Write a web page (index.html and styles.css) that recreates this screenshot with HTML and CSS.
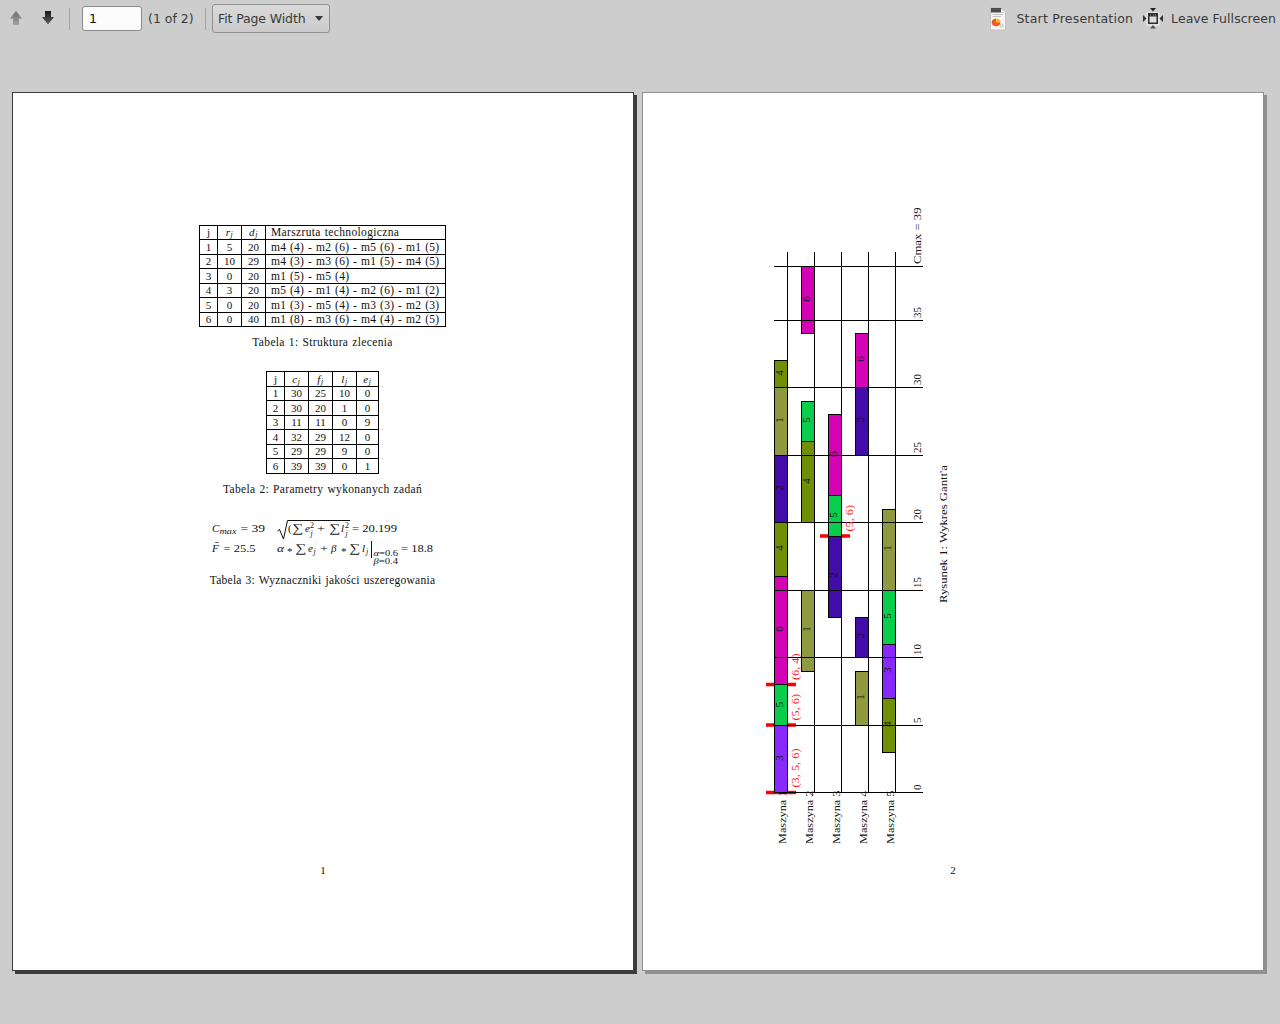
FILE: index.html
```html
<!DOCTYPE html>
<html lang="pl">
<head>
<meta charset="utf-8">
<title>Document Viewer</title>
<link rel="stylesheet" href="styles.css">
</head>
<body>
<header class="toolbar">
  <div class="group">
    <svg class="arrow" width="16" height="16" viewBox="0 0 16 16"><defs><linearGradient id="gu" x1="0" y1="0" x2="0" y2="1"><stop offset="0" stop-color="#6e6e6e"/><stop offset="1" stop-color="#a0a0a0"/></linearGradient></defs><path d="M8 1L14 8.5H11V15H5V8.5H2Z" fill="url(#gu)"/></svg>
    <svg class="arrow" width="16" height="16" viewBox="0 0 16 16"><defs><linearGradient id="gd" x1="0" y1="0" x2="0" y2="1"><stop offset="0" stop-color="#151515"/><stop offset="1" stop-color="#606060"/></linearGradient></defs><path d="M5 1H11V7H14L8 14.5L2 7H5Z" fill="url(#gd)"/></svg>
    <span class="sep"></span>
    <span class="entry">1</span>
    <span class="count">(1 of 2)</span>
    <span class="sep"></span>
    <span class="combo"><span>Fit Page Width</span><svg width="8" height="5" viewBox="0 0 8 5"><path d="M0 0H8L4.5 4.5H3.5Z" fill="#3a3a3a"/></svg></span>
  </div>
  <div class="group">
    <svg class="doc" width="18" height="24" viewBox="0 0 18 24"><path d="M1.5 1H12L16.500 5.500V23H1.500Z" fill="#f4f4f4" stroke="#b8b8b8" stroke-width=".8"/><path d="M2 1H12L15 5.500H2Z" fill="#4a4d50"/><path d="M12 1.500L16 5.500H12Z" fill="#fff"/><path d="M3.500 7.500H14.500M3.500 9.500H12" stroke="#c4c4c4"/><ellipse cx="7" cy="15.500" rx="4.300" ry="3.700" fill="#ef5a28"/><path d="M7 15.500V11.500A4.300 4 0 0 1 11.500 15.500Z" fill="#fbc02d"/><circle cx="12.500" cy="18.500" r="1.500" fill="none" stroke="#bbb"/></svg>
    <span class="label start">Start Presentation</span>
    <svg class="full" width="22" height="22" viewBox="0 0 22 22"><path d="M4 4H18V18H4Z" fill="#e0e0e0"/><path d="M6 5H16V16H6Z" fill="#2d2d2d"/><path d="M7.500 8.500H14.500V14.500H7.500Z" fill="#dcdcdc"/><path d="M8 7H9M11 7H12M13 7H14" stroke="#aaa"/><path d="M8 0H14L11 3.500Z" fill="#222"/><path d="M8 20.500H14L11 17Z" fill="#555"/><path d="M1 7V14L4.500 10.500Z" fill="#333"/><path d="M21 7V14L17.500 10.500Z" fill="#333"/></svg>
    <span class="label leave">Leave Fullscreen</span>
  </div>
</header>
<main class="pages">
  <article class="page current">
    <div class="content">
      <table class="jobs">
        <tr class="head"><td>j</td><td><i>r<sub>j</sub></i></td><td><i>d<sub>j</sub></i></td><td>Marszruta technologiczna</td></tr>
        <tr><td>1</td><td>5</td><td>20</td><td>m4 (4) - m2 (6) - m5 (6) - m1 (5)</td></tr>
        <tr><td>2</td><td>10</td><td>29</td><td>m4 (3) - m3 (6) - m1 (5) - m4 (5)</td></tr>
        <tr><td>3</td><td>0</td><td>20</td><td>m1 (5) - m5 (4)</td></tr>
        <tr><td>4</td><td>3</td><td>20</td><td>m5 (4) - m1 (4) - m2 (6) - m1 (2)</td></tr>
        <tr><td>5</td><td>0</td><td>20</td><td>m1 (3) - m5 (4) - m3 (3) - m2 (3)</td></tr>
        <tr><td>6</td><td>0</td><td>40</td><td>m1 (8) - m3 (6) - m4 (4) - m2 (5)</td></tr>
      </table>
      <p class="caption first">Tabela 1: Struktura zlecenia</p>
      <table class="params">
        <tr><td>j</td><td><i>c<sub>j</sub></i></td><td><i>f<sub>j</sub></i></td><td><i>l<sub>j</sub></i></td><td><i>e<sub>j</sub></i></td></tr>
        <tr><td>1</td><td>30</td><td>25</td><td>10</td><td>0</td></tr>
        <tr><td>2</td><td>30</td><td>20</td><td>1</td><td>0</td></tr>
        <tr><td>3</td><td>11</td><td>11</td><td>0</td><td>9</td></tr>
        <tr><td>4</td><td>32</td><td>29</td><td>12</td><td>0</td></tr>
        <tr><td>5</td><td>29</td><td>29</td><td>9</td><td>0</td></tr>
        <tr><td>6</td><td>39</td><td>39</td><td>0</td><td>1</td></tr>
      </table>
      <p class="caption second">Tabela 2: Parametry wykonanych zadań</p>
      <svg class="formulas" width="225" height="54" viewBox="210 516 225 54">
        <text x="212" y="532" class="it">C</text><text x="219.500" y="534" class="it sm" textLength="17" lengthAdjust="spacingAndGlyphs">max</text><text x="240.500" y="532" textLength="24.500" lengthAdjust="spacingAndGlyphs">= 39</text>
        <path d="M277.500 531L279.500 529.500L283.500 539L287.500 520.500H350" class="rule"/>
        <text x="288" y="532">(</text><text x="292" y="532" class="sum" textLength="11" lengthAdjust="spacingAndGlyphs">∑</text><text x="305" y="532" class="it">e</text><text x="310" y="528" class="sm">2</text><text x="310.500" y="536" class="it sm">j</text><text x="317" y="532" textLength="8" lengthAdjust="spacingAndGlyphs">+</text><text x="329" y="532" class="sum" textLength="11" lengthAdjust="spacingAndGlyphs">∑</text><text x="341" y="532" class="it">l</text><text x="345" y="528" class="sm">2</text><text x="345.500" y="536" class="it sm">j</text><text x="352" y="532" textLength="45" lengthAdjust="spacingAndGlyphs">= 20.199</text>
        <text x="212" y="552" class="it">F</text><path d="M215 542.500H219" class="rule thin"/><text x="223.500" y="552" textLength="32" lengthAdjust="spacingAndGlyphs">= 25.5</text>
        <text x="277" y="552" class="it" textLength="7" lengthAdjust="spacingAndGlyphs">α</text><text x="287" y="555">*</text><text x="295" y="552" class="sum" textLength="11" lengthAdjust="spacingAndGlyphs">∑</text><text x="308" y="552" class="it">e</text><text x="313.500" y="554" class="it sm">j</text><text x="320" y="552" textLength="8" lengthAdjust="spacingAndGlyphs">+</text><text x="331" y="552" class="it">β</text><text x="341" y="555">*</text><text x="349" y="552" class="sum" textLength="11" lengthAdjust="spacingAndGlyphs">∑</text><text x="362" y="552" class="it">l</text><text x="366" y="554" class="it sm">j</text>
        <path d="M371.500 541V558" class="rule"/>
        <text x="373.500" y="556" class="sm" textLength="24.500" lengthAdjust="spacingAndGlyphs"><tspan font-style="italic">α</tspan>=0.6</text><text x="373.500" y="563.500" class="sm" textLength="24.500" lengthAdjust="spacingAndGlyphs"><tspan font-style="italic">β</tspan>=0.4</text><text x="401" y="552" textLength="32" lengthAdjust="spacingAndGlyphs">= 18.8</text>
      </svg>
      <p class="caption third">Tabela 3: Wyznaczniki jakości uszeregowania</p>
    </div>
    <footer>1</footer>
  </article>
  <article class="page">
    <div class="content chart">
      <svg class="gantt" width="200" height="660" viewBox="755 200 200 660">
        <path class="mark" d="M766 792.500H796M766 725H796M766 684.500H796M820 536H850"/>
        <g class="bars">
          <rect class="j3" x="774.500" y="725.500" width="13" height="67"/>
          <rect class="j5" x="774.500" y="684.500" width="13" height="41"/>
          <rect class="j6" x="774.500" y="576.500" width="13" height="108"/>
          <rect class="j4" x="774.500" y="522.500" width="13" height="54"/>
          <rect class="j2" x="774.500" y="455.500" width="13" height="67"/>
          <rect class="j1" x="774.500" y="387.500" width="13" height="68"/>
          <rect class="j4" x="774.500" y="360.500" width="13" height="27"/>
          <rect class="j1" x="801.500" y="590.500" width="13" height="81"/>
          <rect class="j4" x="801.500" y="441.500" width="13" height="81"/>
          <rect class="j5" x="801.500" y="401.500" width="13" height="40"/>
          <rect class="j6" x="801.500" y="266.500" width="13" height="67"/>
          <rect class="j2" x="828.500" y="536.500" width="13" height="81"/>
          <rect class="j5" x="828.500" y="495.500" width="13" height="41"/>
          <rect class="j6" x="828.500" y="414.500" width="13" height="81"/>
          <rect class="j1" x="855.500" y="671.500" width="13" height="54"/>
          <rect class="j2" x="855.500" y="617.500" width="13" height="40"/>
          <rect class="j2" x="855.500" y="387.500" width="13" height="68"/>
          <rect class="j6" x="855.500" y="333.500" width="13" height="54"/>
          <rect class="j4" x="882.500" y="698.500" width="13" height="54"/>
          <rect class="j3" x="882.500" y="644.500" width="13" height="54"/>
          <rect class="j5" x="882.500" y="590.500" width="13" height="54"/>
          <rect class="j1" x="882.500" y="509.500" width="13" height="81"/>
        </g>
        <path class="grid" d="M774 792.500H923M774 725.500H923M774 657.500H923M774 590.500H923M774 522.500H923M774 455.500H923M774 387.500H923M774 320.500H923M774 266.500H923M787.500 252V793M814.500 252V793M841.500 252V793M868.500 252V793M895.500 252V793"/>
        <g class="nums">
          <text transform="translate(783 758) rotate(-90)">3</text>
          <text transform="translate(783 704.500) rotate(-90)">5</text>
          <text transform="translate(783 629) rotate(-90)">6</text>
          <text transform="translate(783 548) rotate(-90)">4</text>
          <text transform="translate(783 488) rotate(-90)">2</text>
          <text transform="translate(783 420) rotate(-90)">1</text>
          <text transform="translate(783 373) rotate(-90)">4</text>
          <text transform="translate(810 629) rotate(-90)">1</text>
          <text transform="translate(810 481) rotate(-90)">4</text>
          <text transform="translate(810 420) rotate(-90)">5</text>
          <text transform="translate(810 299) rotate(-90)">6</text>
          <text transform="translate(837 575) rotate(-90)">2</text>
          <text transform="translate(837 515) rotate(-90)">5</text>
          <text transform="translate(837 454) rotate(-90)">6</text>
          <text transform="translate(864 697) rotate(-90)">1</text>
          <text transform="translate(864 636) rotate(-90)">2</text>
          <text transform="translate(864 420) rotate(-90)">2</text>
          <text transform="translate(864 359) rotate(-90)">6</text>
          <text transform="translate(891 724) rotate(-90)">4</text>
          <text transform="translate(891 670) rotate(-90)">3</text>
          <text transform="translate(891 616) rotate(-90)">5</text>
          <text transform="translate(891 548) rotate(-90)">1</text>
        </g>
        <g class="axis">
          <text transform="translate(921 790) rotate(-90)">0</text>
          <text transform="translate(921 723) rotate(-90)">5</text>
          <text transform="translate(921 655) rotate(-90)">10</text>
          <text transform="translate(921 588) rotate(-90)">15</text>
          <text transform="translate(921 520) rotate(-90)">20</text>
          <text transform="translate(921 453) rotate(-90)">25</text>
          <text transform="translate(921 385) rotate(-90)">30</text>
          <text transform="translate(921 318) rotate(-90)">35</text>
          <text transform="translate(921 264) rotate(-90)" textLength="56.500" lengthAdjust="spacingAndGlyphs">Cmax = 39</text>
          <text transform="translate(786 844) rotate(-90)" textLength="53.500" lengthAdjust="spacingAndGlyphs">Maszyna 1</text>
          <text transform="translate(813 844) rotate(-90)" textLength="53.500" lengthAdjust="spacingAndGlyphs">Maszyna 2</text>
          <text transform="translate(840 844) rotate(-90)" textLength="53.500" lengthAdjust="spacingAndGlyphs">Maszyna 3</text>
          <text transform="translate(867 844) rotate(-90)" textLength="53.500" lengthAdjust="spacingAndGlyphs">Maszyna 4</text>
          <text transform="translate(894 844) rotate(-90)" textLength="53.500" lengthAdjust="spacingAndGlyphs">Maszyna 5</text>
          <text transform="translate(947 603) rotate(-90)" textLength="138" lengthAdjust="spacingAndGlyphs">Rysunek 1: Wykres Gantt'a</text>
        </g>
        <g class="queue">
          <text transform="translate(799 787.500) rotate(-90)" textLength="39" lengthAdjust="spacingAndGlyphs">(3, 5, 6)</text>
          <text transform="translate(799 720.500) rotate(-90)" textLength="26.500" lengthAdjust="spacingAndGlyphs">(5, 6)</text>
          <text transform="translate(799 680) rotate(-90)" textLength="26.500" lengthAdjust="spacingAndGlyphs">(6, 4)</text>
          <text transform="translate(853 531.500) rotate(-90)" textLength="26.500" lengthAdjust="spacingAndGlyphs">(5, 6)</text>
        </g>
      </svg>
    </div>
    <footer>2</footer>
  </article>
</main>
</body>
</html>
```
FILE: styles.css
```css
* { box-sizing: border-box; }
body {
  margin: 0;
  height: 1024px;
  overflow: hidden;
  background: #cdcdcd;
  font-family: "Liberation Serif", serif;
  font-size: 11px;
  color: #111;
}
.toolbar {
  height: 36px;
  display: flex;
  justify-content: space-between;
  padding: 0 4px 0 8px;
  font: 12.5px "DejaVu Sans", sans-serif;
  color: #3a3a3a;
}
.group { display: flex; align-items: center; height: 37px; white-space: nowrap; }
.arrow { margin-right: 16px; position: relative; top: -1px; }
.arrow + .sep { margin-left: -3px; }
.sep { width: 1px; height: 22px; background: #a3a3a3; margin-right: 12px; }
.entry {
  width: 60px; height: 25px; line-height: 24px;
  padding-left: 6px;
  background: #fbfbfb;
  border: 1px solid #8b8b8b; border-radius: 3px;
  color: #111;
}
.count { width: 63px; padding-left: 6px; }
.count + .sep { margin-right: 6px; }
.combo {
  display: flex; align-items: center; justify-content: space-between;
  width: 118px; height: 29px; padding: 0 6px 0 5px;
  border: 1px solid #929292; border-radius: 3px;
  background: linear-gradient(#dadada, #cbcbcb);
  letter-spacing: -.12px;
}
.doc { margin-right: 9px; }
.start { letter-spacing: .2px; margin-right: 9px; }
.leave { letter-spacing: .05px; }
.full { margin-right: 7px; }
.pages { display: flex; gap: 8px; padding: 56px 0 0 12px; }
.page {
  display: flex; flex-direction: column;
  width: 622px; height: 879px;
  background: #fff;
  border: 1px solid #8f8f8f;
  box-shadow: 3px 3px #8f8f8f;
}
.page.current { border-color: #3c3c3c; box-shadow: 3px 3px #3c3c3c; }
.content {
  height: 770px;
  display: flex; flex-direction: column; align-items: center;
  padding: 132px 1px 0 0;
}
.content.chart { align-items: flex-start; padding: 107px 0 0 112px; }
table { display: grid; gap: 1px; padding: 1px; background: #000; }
tbody, tr { display: contents; }
td {
  display: flex; align-items: center; justify-content: center;
  padding: 0 0 1px; background: #fff; line-height: 12px; overflow: hidden;
  letter-spacing: -.1px; white-space: nowrap;
}
.jobs { grid-template: 13px 14px 13px 14px 13px 14px 13px / 17px 23px 23px 179px; }
.jobs td:last-child { justify-content: flex-start; padding-left: 5px; font-size: 11.5px; letter-spacing: .23px; word-spacing: .8px; }
.jobs .head td:last-child { letter-spacing: .35px; }
.params { grid-template: 14px 13px 14px 13px 14px 13px 14px / 17px 23px 23px 23px 21px; }
td i { letter-spacing: .6px; }
sub { font-size: 8px; line-height: 0; vertical-align: -1px; }
.caption { margin: 0; line-height: 14px; white-space: nowrap; font-size: 11.5px; letter-spacing: .34px; word-spacing: .8px; }
.first { margin: 8px 0 22px; }
.second { margin: 8px 0 20px; }
.third { margin-top: 3px; letter-spacing: .25px; }
footer { text-align: center; line-height: 15px; }
svg { display: block; flex: none; }
.formulas text, .gantt text { font-size: 11px; fill: #111; }
.formulas .it { font-style: italic; }
.formulas text.sm { font-size: 8px; }
.formulas .sum { font-size: 12px; }
.rule { fill: none; stroke: #111; stroke-width: 1; }
.thin { stroke-width: .6; }
.grid { stroke: #000; shape-rendering: crispEdges; }
.mark { stroke: #f00; stroke-width: 3.3; }
.bars rect { stroke: #000; shape-rendering: crispEdges; }
.nums text { text-anchor: middle; }
.gantt .queue text { fill: #f22; }
.j1 { fill: #8f993f; }
.j2 { fill: #430ba8; }
.j3 { fill: #8729ff; }
.j4 { fill: #718f06; }
.j5 { fill: #09ce4b; }
.j6 { fill: #d404b6; }
```
